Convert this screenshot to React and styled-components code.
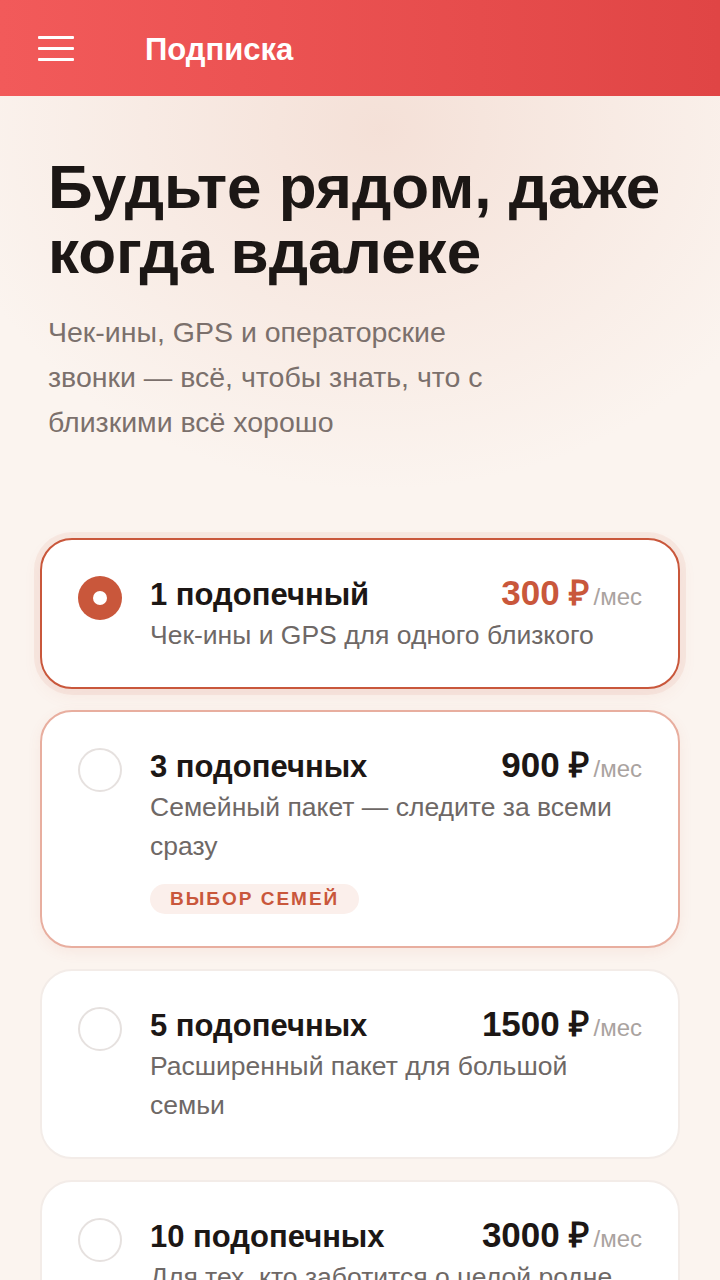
import React from "react";
import styled, { createGlobalStyle } from "styled-components";

const Global = createGlobalStyle`
  html, body { margin: 0; padding: 0; }
  body {
    font-family: "Liberation Sans", Arial, sans-serif;
    background: #fbf4ef;
  }
  * { box-sizing: border-box; }
`;

const Page = styled.div`
  min-height: 1280px;
  background:
    radial-gradient(ellipse 440px 360px at 380px 130px, rgba(238, 205, 192, 0.5), rgba(246, 228, 220, 0) 100%),
    #fbf4ef;
`;

const Header = styled.header`
  height: 96px;
  display: flex;
  align-items: center;
  padding-left: 38px;
  gap: 71px;
  background: linear-gradient(90deg, #f25a5a 0%, #e04545 100%);
`;

const Burger = styled.div`
  width: 36px;
  height: 25px;
  display: flex;
  flex-direction: column;
  justify-content: space-between;
  margin-top: 1px;
  span {
    display: block;
    height: 3px;
    background: #fff;
    border-radius: 1px;
  }
`;

const HeaderTitle = styled.h1`
  margin: 0;
  color: #fff;
  font-size: 31px;
  font-weight: 700;
  margin-top: 4px;
`;

const Hero = styled.section`
  padding: 58px 48px 0;
`;

const Title = styled.h2`
  margin: 0;
  font-size: 62px;
  line-height: 65px;
  font-weight: 700;
  color: #1c1715;
`;

const Subtitle = styled.p`
  margin: 26px 0 0;
  max-width: 482px;
  font-size: 28.5px;
  line-height: 45px;
  color: #7b706c;
`;

const List = styled.div`
  display: flex;
  flex-direction: column;
  gap: 21px;
  padding: 93px 40px 40px;
`;

const Card = styled.div`
  background: #fff;
  border-radius: 32px;
  padding: 35px 36px 32px;
  display: flex;
  gap: 28px;
  align-items: flex-start;
  border: ${(p) =>
    p.$variant === "selected"
      ? "2px solid #c9573b"
      : p.$variant === "featured"
      ? "2px solid #e8ae9f"
      : "2px solid #f3ece8"};
  box-shadow: ${(p) =>
    p.$variant === "selected"
      ? "0 0 0 6px rgba(214, 110, 85, 0.09), 0 6px 18px rgba(200, 90, 60, 0.08)"
      : p.$variant === "featured"
      ? "0 4px 14px rgba(200, 90, 60, 0.08)"
      : "none"};
`;

const Radio = styled.div`
  flex: none;
  width: 44px;
  height: 44px;
  border-radius: 50%;
  margin-top: 1px;
  display: flex;
  align-items: center;
  justify-content: center;
  background: ${(p) => (p.$checked ? "#c9573b" : "#fff")};
  border: ${(p) => (p.$checked ? "none" : "2px solid #e6e1df")};
  &::after {
    content: "";
    display: ${(p) => (p.$checked ? "block" : "none")};
    width: 14px;
    height: 14px;
    border-radius: 50%;
    background: #fff;
  }
`;

const Body = styled.div`
  flex: 1;
  min-width: 0;
`;

const TopRow = styled.div`
  display: flex;
  align-items: baseline;
  justify-content: space-between;
  gap: 12px;
`;

const PlanName = styled.div`
  font-size: 31px;
  font-weight: 700;
  color: #1c1715;
  line-height: 36px;
`;

const Price = styled.div`
  display: flex;
  align-items: baseline;
  gap: 4px;
  white-space: nowrap;
`;

const Amount = styled.span`
  font-size: 35px;
  font-weight: 700;
  line-height: 36px;
  color: ${(p) => (p.$accent ? "#c9573b" : "#1c1715")};
`;

const Per = styled.span`
  font-size: 24px;
  color: #aaa3a0;
`;

const Desc = styled.div`
  margin-top: 3px;
  font-size: 26.5px;
  line-height: 39px;
  color: #6e6866;
`;

const Badge = styled.span`
  display: inline-block;
  margin-top: 18px;
  padding: 0 20px;
  height: 30px;
  line-height: 30px;
  border-radius: 15px;
  background: #fbefeb;
  color: #c9573b;
  font-size: 19px;
  font-weight: 700;
  letter-spacing: 2px;
`;

const plans = [
  { name: "1 подопечный", price: "300 ₽", desc: "Чек-ины и GPS для одного близкого", variant: "selected" },
  { name: "3 подопечных", price: "900 ₽", desc: "Семейный пакет — следите за всеми сразу", variant: "featured", badge: "ВЫБОР СЕМЕЙ" },
  { name: "5 подопечных", price: "1500 ₽", desc: "Расширенный пакет для большой семьи" },
  { name: "10 подопечных", price: "3000 ₽", desc: "Для тех, кто заботится о целой родне" },
];

export default function App() {
  return (
    <>
      <Global />
      <Page>
        <Header>
          <Burger>
            <span />
            <span />
            <span />
          </Burger>
          <HeaderTitle>Подписка</HeaderTitle>
        </Header>
        <Hero>
          <Title>Будьте рядом, даже когда вдалеке</Title>
          <Subtitle>Чек-ины, GPS и операторские звонки — всё, чтобы знать, что с близкими всё хорошо</Subtitle>
        </Hero>
        <List>
          {plans.map((p) => (
            <Card key={p.name} $variant={p.variant}>
              <Radio $checked={p.variant === "selected"} />
              <Body>
                <TopRow>
                  <PlanName>{p.name}</PlanName>
                  <Price>
                    <Amount $accent={p.variant === "selected"}>{p.price}</Amount>
                    <Per>/мес</Per>
                  </Price>
                </TopRow>
                <Desc>{p.desc}</Desc>
                {p.badge && <Badge>{p.badge}</Badge>}
              </Body>
            </Card>
          ))}
        </List>
      </Page>
    </>
  );
}
